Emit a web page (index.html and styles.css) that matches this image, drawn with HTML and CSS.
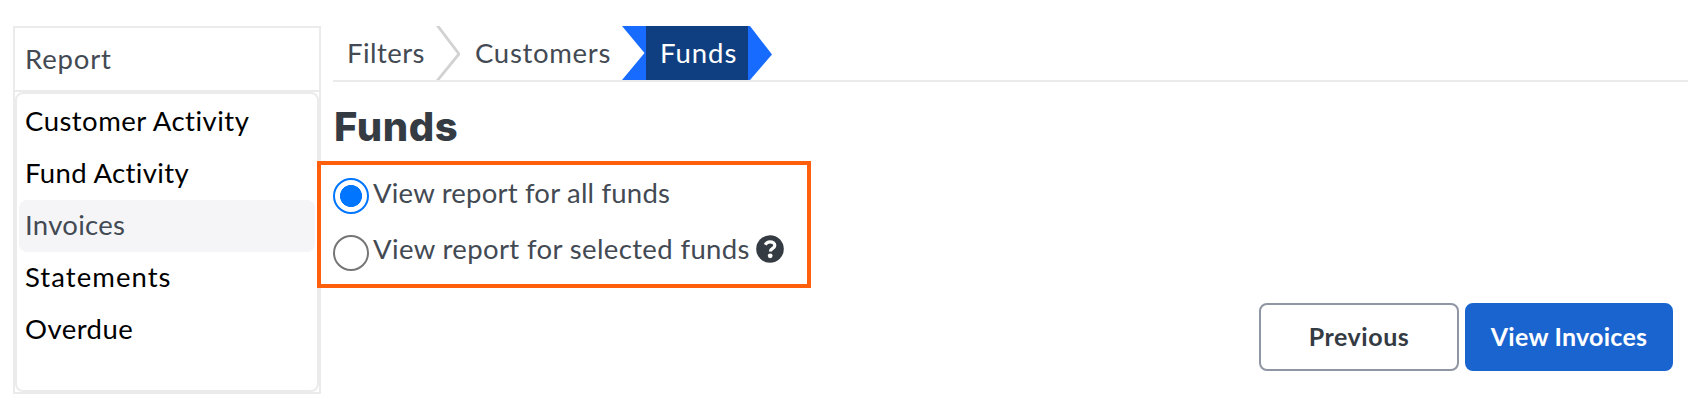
FILE: index.html
```html
<!DOCTYPE html>
<html lang="en">
<head>
<meta charset="utf-8">
<title>Funds report</title>
<link rel="stylesheet" href="styles.css">
</head>
<body>
<div class="page">
  <aside class="sidebar">
    <div class="sidebar-title"><span class="t-report">Report</span></div>
    <nav class="report-list">
      <a class="report-item"><span class="t-customer">Customer Activity</span></a>
      <a class="report-item"><span class="t-fund">Fund Activity</span></a>
      <a class="report-item selected"><span class="t-invoices">Invoices</span></a>
      <a class="report-item"><span class="t-statements">Statements</span></a>
      <a class="report-item"><span class="t-overdue">Overdue</span></a>
    </nav>
  </aside>
  <main class="content">
    <nav class="steps">
      <span class="step step-filters"><span class="t-filters">Filters</span></span>
      <svg class="chevron" width="24" height="54" viewBox="0 0 24 54"><path d="M1 -1 L23 28 L1 55" fill="none" stroke="#d2d2d2" stroke-width="2.8"/></svg>
      <span class="step step-customers"><span class="t-customers">Customers</span></span>
      <svg class="chevron" width="24" height="54" viewBox="0 0 24 54"><path d="M0 0H24V54H0L22.5 27Z" fill="#176bff"/></svg>
      <span class="step step-active"><span class="t-step-funds">Funds</span></span>
      <svg class="chevron" width="24" height="54" viewBox="0 0 24 54"><path d="M0 0H2L24 28.5L2 54H0Z" fill="#176bff"/></svg>
    </nav>
    <h1 class="heading"><span class="t-heading">Funds</span></h1>
    <div class="options">
      <label class="option"><span class="radio checked"></span><span class="t-all">View report for all funds</span></label>
      <label class="option second"><span class="radio"></span><span class="t-selected">View report for selected funds</span>
        <svg class="help" width="28" height="28" viewBox="0 0 28 28"><circle cx="14" cy="14" r="13.8" fill="#343b43"/><path d="M9.2 9.8C10.3 7.8 11.8 6.8 14 6.8C16.7 6.8 18.8 8.2 18.8 10.5C18.8 13.5 14.4 13.3 14.4 16.4" fill="none" stroke="#fff" stroke-width="3.2"/><circle cx="14.2" cy="20.8" r="2.4" fill="#fff"/></svg>
      </label>
      <div class="highlight"></div>
    </div>
    <div class="actions">
      <button class="button"><span class="t-previous">Previous</span></button>
      <button class="button primary"><span class="t-view">View Invoices</span></button>
    </div>
  </main>
</div>
</body>
</html>
```
FILE: styles.css
```css
* { box-sizing: border-box; }
body { margin: 0; background: #fff; overflow: hidden; font-family: Lato, "Open Sans", sans-serif; font-size: 27.5px; font-variant-ligatures: none; color: #434a53; white-space: nowrap; }
.page { display: flex; gap: 12px; height: 407px; padding: 26px 0 0 13px; }
.sidebar { width: 308px; height: 368px; flex: none; border: 2px solid #ebebec; }
.sidebar-title { height: 64px; padding: 0 10px; border-bottom: 2px solid #ebebec; line-height: 62px; }
.report-list { height: 300px; padding: 2px; border: 2px solid #ebebec; border-radius: 8px; }
.report-item { display: block; height: 52px; padding: 0 6px; border-radius: 8px; line-height: 50px; color: #000; }
.selected { background: #f5f5f7; color: #434a53; }
.content { flex: 1; min-width: 0; }
.steps { display: flex; height: 56px; border-bottom: 2px solid #ebebec; }
.step { height: 54px; line-height: 54px; flex: none; }
.step-filters { width: 103px; padding-left: 14px; }
.step-customers { width: 162px; padding-left: 15px; }
.step-active { width: 102px; padding-left: 14px; background: #0f3f80; color: #fff; }
.chevron { display: block; flex: none; }
.heading { height: 79px; margin: 0; padding-left: 1px; font: 800 40px/90px Inter, sans-serif; color: #343b43; }
.options { position: relative; height: 142px; padding-top: 17px; }
.option { display: flex; height: 36px; margin-bottom: 21px; line-height: 30px; }
.second { line-height: 28px; }
.radio { width: 36px; height: 36px; flex: none; margin-right: 4px; border: 2px solid #767676; border-radius: 50%; }
.checked { border-color: #0075ff; background: radial-gradient(circle, #0075ff 10.7px, #fff 11.3px); }
.help { margin-left: 6px; flex: none; }
.highlight { position: absolute; left: -16px; top: 0; width: 494px; height: 127px; border: 4px solid #ff5f0a; }
.actions { display: flex; justify-content: flex-end; gap: 6px; padding-right: 15px; }
.button { width: 200px; height: 68px; padding: 0 0 2px; border: 2px solid #8f95a3; border-radius: 8px; background: #fff; font: 700 25px Lato, sans-serif; color: #343b43; }
.primary { width: 208px; border-color: #1a64cf; background: #1a64cf; color: #fff; }

/* Tracking */
.t-heading { letter-spacing: .6px; }
.t-report { letter-spacing: .85px; }
.t-customer { letter-spacing: .48px; }
.t-fund { letter-spacing: .35px; }
.t-invoices { letter-spacing: .3px; }
.t-statements { letter-spacing: 1.05px; }
.t-overdue { letter-spacing: .45px; }
.t-filters { letter-spacing: .45px; }
.t-customers { letter-spacing: .7px; }
.t-step-funds { letter-spacing: .95px; }
.t-all { letter-spacing: .2px; }
.t-selected { letter-spacing: .37px; }
.t-previous { letter-spacing: .55px; }
.t-view { letter-spacing: .25px; }
```
